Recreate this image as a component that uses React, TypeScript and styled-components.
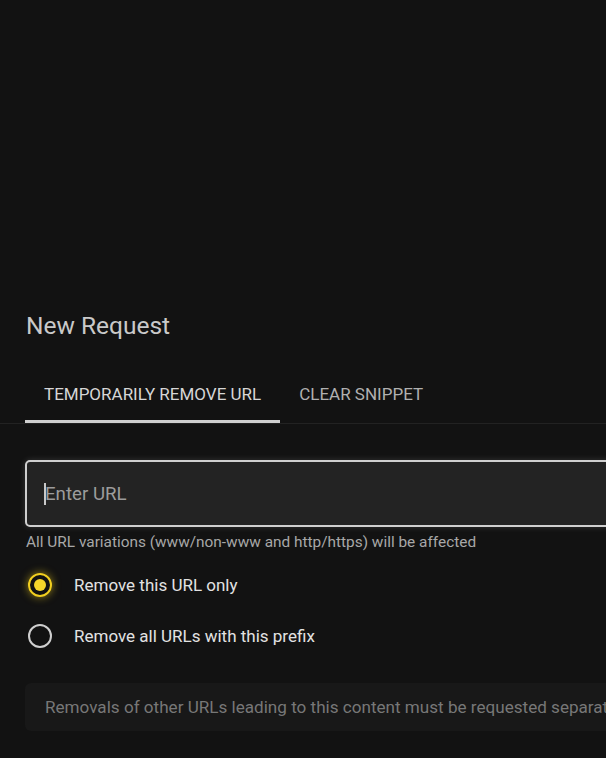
import styled, { createGlobalStyle } from "styled-components";

const GlobalStyle = createGlobalStyle`
  html, body {
    margin: 0;
    padding: 0;
    background: #121212;
    overflow: hidden;
  }
  body {
    font-family: Roboto, "Liberation Sans", sans-serif;
  }
`;

const Page = styled.div`
  padding-top: 312px;
  min-height: 100vh;
  box-sizing: border-box;
  overflow: hidden;
`;

const Title = styled.h2`
  margin: 0 0 0 26px;
  font-size: 24.5px;
  line-height: 28px;
  font-weight: 400;
  color: #c9c9c9;
`;

const TabBar = styled.div`
  display: flex;
  margin-top: 28px;
  padding-left: 25px;
  border-bottom: 1px solid #222;
`;

const Tab = styled.div<{ active?: boolean }>`
  display: flex;
  align-items: center;
  height: 55px;
  box-sizing: border-box;
  padding: 0 19px;
  border-bottom: 3px solid ${({ active }) => (active ? "#cfcfcf" : "transparent")};
  font-size: 17px;
  text-transform: uppercase;
  color: ${({ active }) => (active ? "#d6d6d6" : "#b0b0b0")};
`;

const Form = styled.div`
  display: flex;
  flex-direction: column;
  width: 800px;
  padding-left: 25px;
`;

const Field = styled.div`
  position: relative;
  display: flex;
  margin-top: 36px;
`;

const UrlInput = styled.input`
  flex: 1;
  height: 67px;
  box-sizing: border-box;
  padding: 0 18px;
  border: 2px solid #cfcfcf;
  border-radius: 5px;
  background: #232323;
  font-family: inherit;
  font-size: 18.7px;
  color: #ddd;
  outline: none;
  box-shadow: 0 0 6px rgba(255, 255, 255, 0.15);
  &::placeholder {
    color: #9c9c9c;
  }
`;

const Caret = styled.span`
  position: absolute;
  left: 19px;
  top: 23px;
  width: 2px;
  height: 22px;
  background: #c8c8c8;
`;

const Helper = styled.div`
  margin: 6px 0 0 1px;
  font-size: 15.4px;
  line-height: 18px;
  color: #a8a8a8;
`;

const RadioGroup = styled.div`
  display: flex;
  flex-direction: column;
  gap: 11px;
  margin-top: 14px;
`;

const RadioRow = styled.label`
  display: flex;
  align-items: center;
  gap: 22px;
  height: 40px;
  font-size: 17px;
  color: #e2e2e2;
`;

const RadioMark = styled.span<{ checked?: boolean }>`
  position: relative;
  width: 24px;
  height: 24px;
  margin-left: 3px;
  box-sizing: border-box;
  border-radius: 50%;
  border: 2px solid ${({ checked }) => (checked ? "#f2cf1f" : "#cfcfcf")};
  box-shadow: ${({ checked }) =>
    checked ? "0 0 9px rgba(242, 207, 31, 0.6)" : "none"};
  &::after {
    content: "";
    display: ${({ checked }) => (checked ? "block" : "none")};
    position: absolute;
    left: 4px;
    top: 4px;
    width: 12px;
    height: 12px;
    border-radius: 50%;
    background: #f5d52a;
  }
`;

const InfoBox = styled.div`
  display: flex;
  align-items: center;
  margin-top: 27px;
  height: 48px;
  padding-left: 20px;
  border-radius: 6px;
  background: #181818;
  font-size: 17.1px;
  color: #777;
  white-space: nowrap;
`;

export default function App() {
  return (
    <Page>
      <GlobalStyle />
      <Title>New Request</Title>
      <TabBar>
        <Tab active>Temporarily remove URL</Tab>
        <Tab>Clear snippet</Tab>
      </TabBar>
      <Form>
        <Field>
          <UrlInput placeholder="Enter URL" />
          <Caret />
        </Field>
        <Helper>All URL variations (www/non-www and http/https) will be affected</Helper>
        <RadioGroup>
          <RadioRow>
            <RadioMark checked />
            Remove this URL only
          </RadioRow>
          <RadioRow>
            <RadioMark />
            Remove all URLs with this prefix
          </RadioRow>
        </RadioGroup>
        <InfoBox>
          Removals of other URLs leading to this content must be requested separately.
        </InfoBox>
      </Form>
    </Page>
  );
}
